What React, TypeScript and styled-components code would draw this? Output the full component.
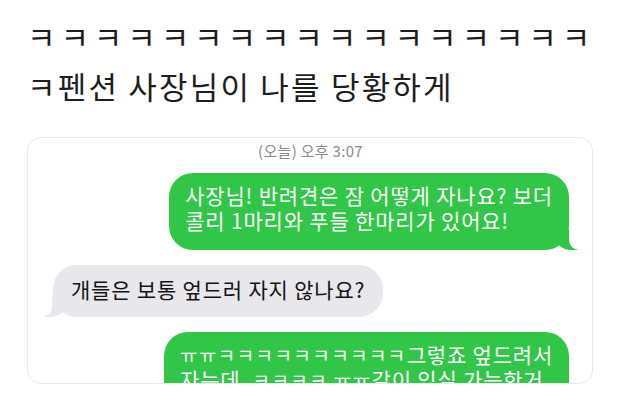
import React from "react";
import styled, { createGlobalStyle } from "styled-components";

const Global = createGlobalStyle`
  html, body { margin: 0; padding: 0; background: #ffffff; }
  body { font-family: "Noto Sans CJK KR", "Noto Sans", sans-serif; }
`;

const Page = styled.div`
  width: 620px;
  height: 401px;
  box-sizing: border-box;
  padding: 11px 27px 0 27px;
  display: flex;
  flex-direction: column;
  overflow: hidden;
`;

const Heading = styled.h1`
  margin: 0 0 26px 0;
  padding-left: 0;
  font-size: 31px;
  font-weight: 400;
  line-height: 50px;
  color: #1e1e1e;
  white-space: nowrap;
  letter-spacing: 2.2px;
`;

const Laugh = styled.span`
  letter-spacing: 4.9px;
`;

const Card = styled.div`
  height: 247px;
  box-sizing: border-box;
  border: 1px solid #e9e9e9;
  border-radius: 14px;
  background: #fff;
  overflow: hidden;
  display: flex;
  flex-direction: column;
  padding: 3px 23px 0 24px;
`;

const Stamp = styled.div`
  text-align: center;
  font-size: 15px;
  line-height: 20px;
  letter-spacing: 0.3px;
  color: #8a8a8e;
  margin-bottom: 12px;
`;

const Row = styled.div<{ $out?: boolean }>`
  display: flex;
  justify-content: ${(p) => (p.$out ? "flex-end" : "flex-start")};
  padding: ${(p) => (p.$out ? "0" : "0 0 0 1px")};
  margin-bottom: 15px;
  flex-shrink: 0;
`;

const Bubble = styled.div<{ $out?: boolean }>`
  position: relative;
  box-sizing: border-box;
  font-size: 21px;
  line-height: 25px;
  letter-spacing: 0.8px;
  white-space: nowrap;
  border-radius: 24px;
  padding: ${(p) => (p.$out ? "10px 16px 17px 16px" : "12px 18px 15px 18px")};
  background: ${(p) => (p.$out ? "#31c648" : "#e8e8ec")};
  color: ${(p) => (p.$out ? "#ffffff" : "#141414")};
  &::before {
    content: "";
    position: absolute;
    bottom: 0;
    ${(p) => (p.$out ? "right: -8px;" : "left: -9px;")}
    width: 22px;
    height: 20px;
    background: ${(p) => (p.$out ? "#31c648" : "#e8e8ec")};
    ${(p) =>
      p.$out
        ? "border-bottom-left-radius: 16px 14px;"
        : "border-bottom-right-radius: 16px 14px;"}
  }
  &::after {
    content: "";
    position: absolute;
    bottom: 0;
    ${(p) => (p.$out ? "right: -12px;" : "left: -13px;")}
    width: 12px;
    height: 20px;
    background: #ffffff;
    ${(p) =>
      p.$out
        ? "border-bottom-left-radius: 10px;"
        : "border-bottom-right-radius: 10px;"}
  }
`;

const Jamo = styled.span`
  font-size: 19px;
  letter-spacing: 1.4px;
`;

export default function App() {
  return (
    <>
      <Global />
      <Page>
        <Heading>
          <Laugh>ㅋㅋㅋㅋㅋㅋㅋㅋㅋㅋㅋㅋㅋㅋㅋㅋㅋ</Laugh>
          <br />
          ㅋ펜션 사장님이 나를 당황하게
        </Heading>
        <Card>
          <Stamp>(오늘) 오후 3:07</Stamp>
          <Row $out>
            <Bubble $out>
              사장님! 반려견은 잠 어떻게 자나요? 보더
              <br />
              콜리 1마리와 푸들 한마리가 있어요!
            </Bubble>
          </Row>
          <Row>
            <Bubble>개들은 보통 엎드러 자지 않나요?</Bubble>
          </Row>
          <Row $out>
            <Bubble $out>
              <Jamo>ㅠㅠㅋㅋㅋㅋㅋㅋㅋㅋㅋㅋ</Jamo>그렇죠 엎드려서
              <br />
              자는데, <Jamo>ㅋㅋㅋㅋ ㅠㅠ</Jamo>같이 있실 가능한거
            </Bubble>
          </Row>
        </Card>
      </Page>
    </>
  );
}
